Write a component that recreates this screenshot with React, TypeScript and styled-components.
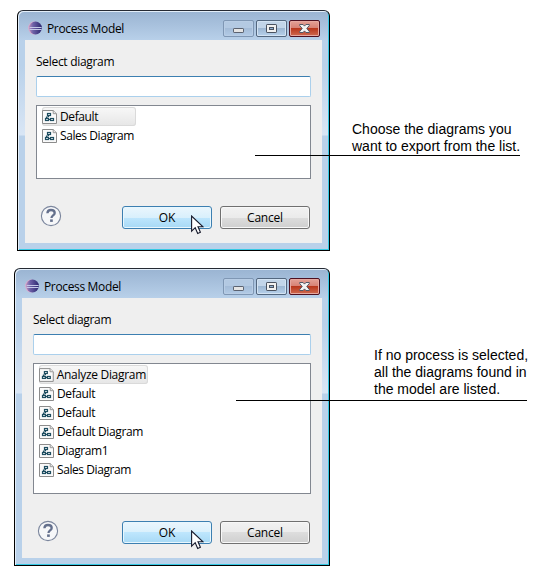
import React from "react";
import styled, { createGlobalStyle } from "styled-components";

const GlobalStyle = createGlobalStyle`
  * { box-sizing: border-box; }
  body {
    margin: 0;
    background: #fff;
    color: #000;
    font: 12px/18px "Open Sans", "Noto Sans", sans-serif;
    overflow: hidden;
  }
  svg { display: block; }
`;

const Page = styled.main`
  position: relative;
  width: 537px;
  height: 578px;
  padding-top: 10px;
  display: flex;
  flex-direction: column;
  gap: 17px;
  overflow: hidden;
`;

const Window = styled.section<{ $wide?: boolean; $height: number }>`
  position: relative;
  flex: none;
  width: ${(p) => (p.$wide ? 316 : 313)}px;
  height: ${(p) => p.$height}px;
  margin-left: ${(p) => (p.$wide ? 14 : 17)}px;
  padding: 0 7px 7px;
  border: 1px solid #000;
  border-top-color: #252a33;
  border-radius: 6px 6px 0 0;
  background: linear-gradient(#9ab4d2 0, #a8c1dd 14px, #b9d1ea 30px, #b9d1ea 55px, #d9e6f5 124px, #b9d1ea 125px);
  box-shadow: inset 1px 1px 0 #e3eef9, inset -1px -1px 0 #35c9e4;
  display: flex;
  flex-direction: column;
`;

const TitleBar = styled.header`
  flex: none;
  height: 29px;
  padding: 9px 2px 0 3px;
  display: flex;
  align-items: flex-start;
`;

const AppIconSlot = styled.span`
  margin-top: 1px;
`;

const Title = styled.h1`
  margin: 0 auto 0 5px;
  font-size: 12px;
  font-weight: 400;
  line-height: 18px;
  letter-spacing: -0.35px;
  white-space: nowrap;
`;

const WindowButtons = styled.div`
  display: flex;
  gap: 2px;
`;

const WindowButton = styled.button<{ $kind: "min" | "max" | "close" }>`
  width: 31px;
  height: 17px;
  padding: 0;
  display: flex;
  align-items: center;
  justify-content: center;
  border-radius: 2px;
  border: 1px solid
    ${(p) => ({ min: "#7f97b4", max: "#53677f", close: "#4d1020" })[p.$kind]};
  box-shadow: inset 0 0 0 1px
    ${(p) => ({ min: "#b8cde5", max: "#d3e3f3", close: "#e6a8a0" })[p.$kind]};
  background: ${(p) =>
    ({
      min: "linear-gradient(#b3c9e2 50%, #a4bcd8 50%, #b2cbe6)",
      max: "linear-gradient(#c2d5e9 50%, #9db7d3 50%, #b7d1eb)",
      close: "linear-gradient(#e4a197, #d67f72 50%, #b9371d 50%, #cf6b51)",
    })[p.$kind]};
`;

const Client = styled.div`
  flex: 1;
  min-height: 0;
  padding: 13px 11px 14px;
  background: #efefef;
  display: flex;
  flex-direction: column;
`;

const Label = styled.label`
  flex: none;
  height: 23px;
  line-height: 18px;
  letter-spacing: -0.3px;
`;

const Input = styled.input`
  flex: none;
  width: 100%;
  height: 21px;
  padding: 0 4px;
  border: 1px solid #abd0ec;
  border-top-color: #3c7fb1;
  border-radius: 2px;
  background: #fff;
  outline: none;
`;

const List = styled.ul<{ $height: number }>`
  flex: none;
  height: ${(p) => p.$height}px;
  margin: 8px 0 0;
  padding: 1px 5px;
  list-style: none;
  border: 1px solid #828790;
  background: #fff;
`;

const Item = styled.li<{ $selected?: number }>`
  width: ${(p) => (p.$selected ? `${p.$selected}px` : "max-content")};
  height: 19px;
  padding-right: 2px;
  display: flex;
  align-items: center;
  gap: 3px;
  white-space: nowrap;
  border-radius: 3px;
  background: ${(p) => (p.$selected ? "linear-gradient(#f8f8f8, #e6e6e6)" : "none")};
  box-shadow: ${(p) => (p.$selected ? "inset 0 0 0 1px #dadada" : "none")};
`;

const ItemText = styled.span<{ $tracking: number }>`
  letter-spacing: ${(p) => p.$tracking}px;
`;

const Footer = styled.footer`
  margin-top: auto;
  padding-right: 1px;
  display: flex;
  align-items: center;
  gap: 8px;
`;

const HelpSlot = styled.div`
  margin: -3px auto 0 4px;
`;

const Button = styled.button<{ $primary?: boolean }>`
  width: 90px;
  height: 23px;
  padding: 1px 0 0;
  font: inherit;
  letter-spacing: -0.2px;
  color: #000;
  border: 1px solid ${(p) => (p.$primary ? "#3c7fb1" : "#707070")};
  border-radius: 3px;
  box-shadow: inset 0 0 0 1px ${(p) => (p.$primary ? "#e8f7fe" : "#f8f8f8")};
  background: ${(p) =>
    p.$primary
      ? "linear-gradient(#eaf6fd, #d9f0fc 50%, #bee6fd 50%, #a7d9f5)"
      : "linear-gradient(#f2f2f2, #ebebeb 50%, #dddddd 50%, #cfcfcf)"};
`;

const Pointer = styled.svg`
  position: absolute;
  right: 125px;
  bottom: 15px;
`;

const Callout = styled.aside<{ $left: number; $top: number; $width: number; $indent: number; $drop: number }>`
  position: absolute;
  left: ${(p) => p.$left}px;
  top: ${(p) => p.$top}px;
  width: ${(p) => p.$width}px;
  padding: 0 0 ${(p) => p.$drop}px ${(p) => p.$indent}px;
  border-bottom: 1px solid #000;
  font: 14px/17px "Liberation Sans", Arial, sans-serif;
  white-space: nowrap;
`;

const AppIcon = () => (
  <svg width="14" height="14" viewBox="0 0 14 14">
    <defs>
      <linearGradient id="orb" x1="0" x2="1">
        <stop offset="0" stopColor="#b58fc0" />
        <stop offset=".3" stopColor="#6f62a8" />
        <stop offset="1" stopColor="#2b2870" />
      </linearGradient>
    </defs>
    <ellipse cx="6" cy="7" rx="5.8" ry="6.4" fill="#dcaacb" />
    <circle cx="7.5" cy="7" r="6.4" fill="url(#orb)" />
    <path d="M1.6 6.5h12M1.6 8.5h12" stroke="#c5c9e8" strokeWidth="1" />
  </svg>
);

const MinimizeIcon = () => (
  <svg width="11" height="11" viewBox="0 0 11 11">
    <rect x=".5" y="5.5" width="10" height="4" rx=".6" fill="#e4e4e4" stroke="#5b6270" />
  </svg>
);

const MaximizeIcon = () => (
  <svg width="11" height="11" viewBox="0 0 11 11">
    <rect x=".5" y="1.5" width="10" height="8" rx=".6" fill="#f0f0f0" stroke="#4a5260" />
    <rect x="3.5" y="4.5" width="4" height="2" fill="#8fb0d2" stroke="#4a5260" />
  </svg>
);

const CloseIcon = () => (
  <svg width="11" height="11" viewBox="0 0 11 11">
    <path
      d="M.7 1.5h3.4l1.4 1.6 1.4-1.6h3.4v1L7.8 5.5l2.5 3v1H6.9L5.5 7.9 4.1 9.5H.7v-1l2.5-3-2.5-3z"
      fill="#f3f3f3"
      stroke="#525866"
    />
  </svg>
);

const DiagramIcon = () => (
  <svg width="15" height="14" viewBox="0 0 15 14">
    <path d="M.5 .5h10.7l3.3 3.2v9.8H.5z" fill="#fafafa" stroke="#8c8c8c" />
    <path d="M11.2 .5v3.2h3.3" fill="#e5e5e5" stroke="#9a9a9a" />
    <g fill="none" stroke="#1d4d60" strokeWidth="1.2">
      <rect x="5.5" y="3.5" width="3" height="2" />
      <rect x="3.5" y="8.5" width="3" height="2" />
      <rect x="8.5" y="8.5" width="3" height="2" />
      <path d="M6.5 5.5v1.5M4.5 8.5V7H6.5M6.5 9.5h2" />
    </g>
  </svg>
);

const HelpIcon = () => (
  <svg width="22" height="22" viewBox="0 0 22 22">
    <circle cx="11" cy="11" r="9.6" fill="#f6f7f9" stroke="#7b869d" strokeWidth="1.1" />
    <path
      d="M7.4 8.2C7.5 5.9 9 5 11 5c2.1 0 3.7 1.1 3.7 2.9 0 2.6-3.2 2.4-3.2 5"
      fill="none"
      stroke="#64708d"
      strokeWidth="2.3"
    />
    <rect x="10.1" y="14.4" width="2.7" height="2.5" fill="#64708d" />
  </svg>
);

const Cursor = () => (
  <Pointer width="13" height="20" viewBox="0 0 13 20">
    <path
      d="M.6 1v15.2l3.6-3.5 2.5 5.8 2.7-1.2L7 11.8h5z"
      fill="#fff"
      stroke="#171a2c"
      strokeWidth="1.1"
    />
  </Pointer>
);

type Entry = { name: string; tracking: number };

interface DialogProps {
  wide?: boolean;
  height: number;
  listHeight: number;
  selectedWidth: number;
  entries: Entry[];
}

const DiagramDialog = ({ wide, height, listHeight, selectedWidth, entries }: DialogProps) => (
  <Window $wide={wide} $height={height}>
    <TitleBar>
      <AppIconSlot><AppIcon /></AppIconSlot>
      <Title>Process Model</Title>
      <WindowButtons>
        <WindowButton $kind="min" aria-label="Minimize"><MinimizeIcon /></WindowButton>
        <WindowButton $kind="max" aria-label="Maximize"><MaximizeIcon /></WindowButton>
        <WindowButton $kind="close" aria-label="Close"><CloseIcon /></WindowButton>
      </WindowButtons>
    </TitleBar>
    <Client>
      <Label>Select diagram</Label>
      <Input aria-label="Select diagram" />
      <List $height={listHeight}>
        {entries.map((e, i) => (
          <Item key={i} $selected={i === 0 ? selectedWidth : undefined}>
            <DiagramIcon />
            <ItemText $tracking={e.tracking}>{e.name}</ItemText>
          </Item>
        ))}
      </List>
      <Footer>
        <HelpSlot><HelpIcon /></HelpSlot>
        <Button $primary>OK</Button>
        <Button>Cancel</Button>
      </Footer>
    </Client>
    <Cursor />
  </Window>
);

const exportList: Entry[] = [
  { name: "Default", tracking: -0.4 },
  { name: "Sales Diagram", tracking: -0.42 },
];

const modelList: Entry[] = [
  { name: "Analyze Diagram", tracking: -0.3 },
  { name: "Default", tracking: -0.4 },
  { name: "Default", tracking: -0.4 },
  { name: "Default Diagram", tracking: -0.37 },
  { name: "Diagram1", tracking: -0.4 },
  { name: "Sales Diagram", tracking: -0.42 },
];

export default function App() {
  return (
    <>
      <GlobalStyle />
      <Page>
        <DiagramDialog height={241} listHeight={74} selectedWidth={94} entries={exportList} />
        <DiagramDialog wide height={298} listHeight={131} selectedWidth={109} entries={modelList} />
        <Callout $left={255} $top={121} $width={265} $indent={97} $drop={0}>
          <div>Choose the diagrams you</div>
          <div>want to export from the list.</div>
        </Callout>
        <Callout $left={236} $top={347} $width={291} $indent={138} $drop={2}>
          <div>If no process is selected,</div>
          <div>all the diagrams found in</div>
          <div>the model are listed.</div>
        </Callout>
      </Page>
    </>
  );
}
